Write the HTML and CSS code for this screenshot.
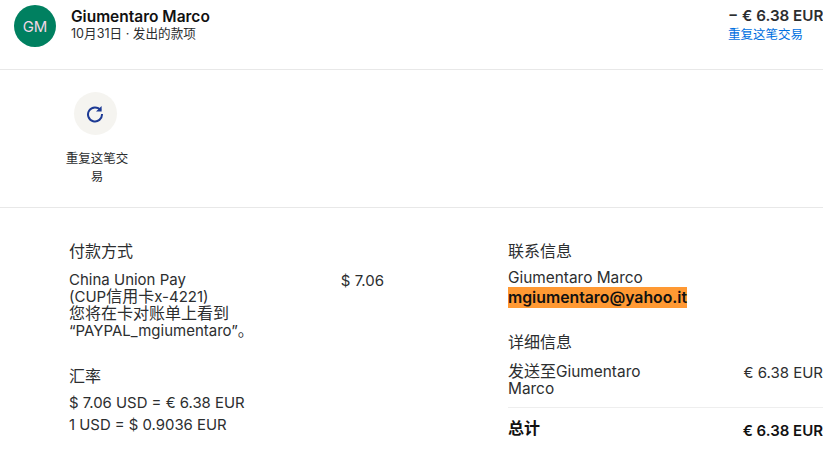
FILE: index.html
```html
<!DOCTYPE html>
<html>
<head>
	<title>Transaction details</title>
	<link rel="stylesheet" href="styles.css">
</head>
<body>
	<div class="summary">
		<div class="avatar">GM</div>
		<div class="summary-text">
			<div class="name">Giumentaro Marco</div>
			<div class="meta">10月31日 · 发出的款项</div>
		</div>
		<div class="summary-amount">
			<div class="amount">− € 6.38 EUR</div>
			<a class="repeat-link" href="#">重复这笔交易</a>
		</div>
	</div>

	<div class="actions">
		<div class="action">
			<div class="action-icon">
				<svg width="18" height="18" viewBox="0 0 18 18" fill="none">
					<path d="M14.6 5.2A7 7 0 1 0 16 9" stroke="#1d3a94" stroke-width="2"/>
					<path d="M15.6 1v5.6H10z" fill="#1d3a94"/>
				</svg>
			</div>
			<div class="action-label">重复这笔交易</div>
		</div>
	</div>

	<div class="details">
		<div class="col-left">
			<h3>付款方式</h3>
			<div class="pay-row">
				<p class="pay-text">China Union Pay<br>(CUP<span class="cn">信用卡</span>x-4221)<br><span class="cn">您将在卡对账单上看到</span><br>“PAYPAL_mgiumentaro”<span class="cn">。</span></p>
				<div class="pay-amount">$ 7.06</div>
			</div>
			<h3 class="rate-title">汇率</h3>
			<p class="rate">$ 7.06 USD = € 6.38 EUR</p>
			<p class="rate">1 USD = $ 0.9036 EUR</p>
		</div>
		<div class="col-right">
			<h3>联系信息</h3>
			<div class="contact-name">Giumentaro Marco</div>
			<div><span class="email">mgiumentaro@yahoo.it</span></div>
			<h3 class="info-title">详细信息</h3>
			<div class="line">
				<div class="line-name"><span class="cn">发送至</span>Giumentaro Marco</div>
				<div class="line-value">€ 6.38 EUR</div>
			</div>
			<div class="line total">
				<div class="cn total-label">总计</div>
				<div class="total-value">€ 6.38 EUR</div>
			</div>
		</div>
	</div>
</body>
</html>
```

FILE: styles.css
```css
body {
	margin: 0;
	height: 455px;
	overflow: hidden;
	background-color: #fff;
	color: #2c2e2f;
	font-family: Inter, "Noto Sans CJK SC", sans-serif;
	font-size: 15px;
}
p, h3 {
	margin: 0;
	font-weight: normal;
}
.cn {
	font-size: 16px;
}
.summary {
	display: flex;
	height: 69px;
	padding-left: 14px;
	border-bottom: 1px solid #e8e8e8;
}
.avatar {
	display: flex;
	align-items: center;
	justify-content: center;
	width: 42px;
	height: 42px;
	margin-top: 5px;
	border-radius: 50%;
	background-color: #008060;
	color: #f3d7e6;
	font-size: 15px;
}
.summary-text {
	flex: 1;
	margin-left: 15px;
	padding-top: 7px;
}
.name {
	font-size: 15.5px;
	font-weight: 600;
	line-height: 19px;
	color: #111;
}
.meta {
	font-size: 12.6px;
	line-height: 16px;
}
.summary-amount {
	width: 95px;
	padding-top: 6px;
}
.amount {
	font-size: 15.2px;
	font-weight: 600;
	line-height: 20px;
	white-space: nowrap;
}
.repeat-link {
	display: block;
	font-size: 12.5px;
	line-height: 18px;
	color: #0070e0;
	text-decoration: none;
}
.actions {
	height: 138px;
	padding: 22px 0 0 60px;
	box-sizing: border-box;
	border-bottom: 1px solid #e8e8e8;
}
.action {
	width: 70px;
	text-align: center;
}
.action-icon {
	display: flex;
	align-items: center;
	justify-content: center;
	width: 43px;
	height: 43px;
	margin: 0 auto;
	border-radius: 50%;
	background-color: #f5f4f0;
}
.action-label {
	margin-top: 15px;
	padding-left: 4px;
	font-size: 12.5px;
	line-height: 18px;
}
.details {
	display: flex;
	padding: 33px 0 0 69px;
}
.col-left {
	width: 315px;
	margin-right: 124px;
}
.col-right {
	flex: 1;
}
h3 {
	font-size: 16px;
	line-height: 20px;
}
.pay-row {
	display: flex;
	justify-content: space-between;
	margin-top: 10px;
}
.pay-text {
	line-height: 17px;
}
.pay-amount {
	line-height: 20px;
}
.rate-title {
	margin-top: 27px;
}
.rate {
	margin-top: 1px;
	font-size: 14.9px;
	line-height: 21px;
}
.rate-title + .rate {
	margin-top: 7px;
}
.contact-name {
	margin-top: 7px;
	font-size: 15.4px;
	line-height: 19px;
}
.email {
	display: inline-block;
	background-color: #ff9933;
	font-size: 15.8px;
	font-weight: 600;
	color: #111;
	line-height: 21px;
}
.info-title {
	margin-top: 24px;
}
.line {
	display: flex;
	justify-content: space-between;
	margin-top: 11px;
	padding-bottom: 10px;
}
.line-name {
	width: 150px;
	font-size: 15.4px;
	line-height: 17px;
}
.total {
	align-items: flex-start;
	margin-top: 0;
	padding-top: 10px;
	border-top: 1px solid #eee;
	font-weight: 600;
	color: #111;
}
.total-label {
	line-height: 20px;
}
.total-value {
	margin-top: 3px;
	line-height: 20px;
}
```
